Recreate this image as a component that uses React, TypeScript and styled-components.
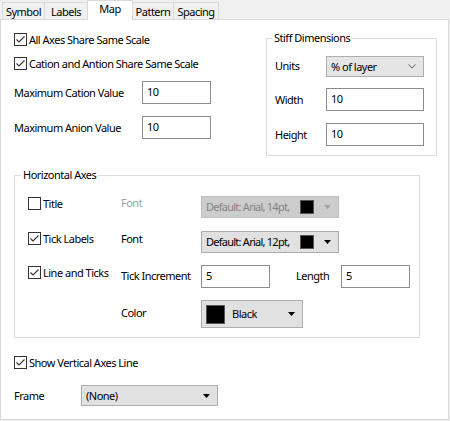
import React from 'react'
import styled, { createGlobalStyle } from 'styled-components'

const GlobalStyle = createGlobalStyle`
  body {
    margin: 0;
    background: #f0f0f0;
    font-family: "Noto Sans", "Liberation Sans", sans-serif;
    font-size: 11px;
    letter-spacing: -0.5px;
    color: #000;
  }
  * { box-sizing: border-box; }
`

const Window = styled.div`
  width: 450px;
  height: 421px;
  display: flex;
  flex-direction: column;
`

const TabBar = styled.div`
  display: flex;
  align-items: flex-end;
  height: 19px;
  padding-left: 2px;
`

const Tab = styled.div<{ $active?: boolean; $w: number }>`
  position: relative;
  width: ${p => p.$w}px;
  height: ${p => (p.$active ? 20 : 17)}px;
  margin-left: -1px;
  margin-bottom: ${p => (p.$active ? -1 : 0)}px;
  z-index: ${p => (p.$active ? 2 : 1)};
  display: flex;
  justify-content: center;
  align-items: ${p => (p.$active ? 'flex-start' : 'center')};
  padding-top: ${p => (p.$active ? 0 : 1)}px;
  line-height: 16px;
  background: ${p => (p.$active ? '#fff' : '#f0f0f0')};
  border: 1px solid #d9d9d9;
  border-bottom: none;
  &:first-child { margin-left: 0; }
`

const Panel = styled.div`
  width: 449px;
  height: 401px;
  background: #fff;
  border: 1px solid #d9d9d9;
  padding: 10px 0 0 13px;
`

const TopSection = styled.div`
  display: flex;
  align-items: flex-start;
`

const LeftColumn = styled.div`
  width: 252px;
  padding-top: 3px;
  display: flex;
  flex-direction: column;
`

const GroupBox = styled.fieldset<{ $w: number; $pad: string; $mt?: number }>`
  width: ${p => p.$w}px;
  margin: ${p => p.$mt ?? 0}px 0 0 0;
  min-inline-size: 0;
  border: 1px solid #dcdcdc;
  padding: ${p => p.$pad};
`

const GroupTitle = styled.legend<{ $shift: number }>`
  padding: 0 2px;
  margin-left: ${p => p.$shift}px;
  line-height: 16px;
`

const CheckRow = styled.label<{ $mt?: number }>`
  display: flex;
  align-items: center;
  height: 13px;
  margin-top: ${p => p.$mt ?? 0}px;
  white-space: nowrap;
`

const Box = styled.span`
  width: 13px;
  height: 13px;
  flex: none;
  border: 1px solid #333;
  background: #fff;
  margin-right: 2px;
  display: flex;
`

const FieldRow = styled.div<{ $mt?: number }>`
  display: flex;
  align-items: center;
  margin-top: ${p => p.$mt ?? 0}px;
`

const FieldLabel = styled.span<{ $w: number; $dim?: boolean; $dy?: number }>`
  width: ${p => p.$w}px;
  flex: none;
  line-height: 16px;
  white-space: nowrap;
  color: ${p => (p.$dim ? '#a0a0a0' : '#000')};
  position: relative;
  top: ${p => p.$dy ?? 0}px;
`

const TextBox = styled.div<{ $w: number }>`
  width: ${p => p.$w}px;
  height: 23px;
  flex: none;
  border: 1px solid #8c8c8c;
  background: #fff;
  padding: 2px 0 0 4px;
  line-height: 16px;
`

const Combo = styled.div<{ $w: number; $h?: number; $disabled?: boolean; $light?: boolean }>`
  width: ${p => p.$w}px;
  height: ${p => p.$h ?? 21}px;
  flex: none;
  display: flex;
  align-items: center;
  padding: 0 7px 0 4px;
  line-height: 16px;
  white-space: nowrap;
  overflow: hidden;
  background: ${p => (p.$disabled ? '#cccccc' : p.$light ? '#e5e5e5' : '#e1e1e1')};
  border: 1px solid ${p => (p.$disabled ? '#bfbfbf' : '#adadad')};
  color: ${p => (p.$disabled ? '#838383' : '#000')};
`

const ComboText = styled.span<{ $tight?: boolean }>`
  flex: 1;
  min-width: 0;
  letter-spacing: ${p => (p.$tight ? '-0.75px' : '-0.5px')};
`

const Swatch = styled.span<{ $size: number; $gap: number }>`
  width: ${p => p.$size}px;
  height: ${p => p.$size}px;
  flex: none;
  background: #000;
  border: 1px solid #555;
  margin-right: ${p => p.$gap}px;
`

const AxesGrid = styled.div`
  display: flex;
  flex-direction: column;
`

const AxisRow = styled.div<{ $mt?: number }>`
  display: flex;
  align-items: flex-start;
  margin-top: ${p => p.$mt ?? 0}px;
`

const CheckCell = styled.div`
  width: 93px;
  flex: none;
  padding-top: 1px;
`

const Spacer = styled.div<{ $w: number }>`
  width: ${p => p.$w}px;
  flex: none;
`

const BottomArea = styled.div`
  display: flex;
  flex-direction: column;
`

function Check({ checked, children, mt }: { checked?: boolean; children: React.ReactNode; mt?: number }) {
  return (
    <CheckRow $mt={mt}>
      <Box>
        {checked && (
          <svg width="11" height="11" viewBox="0 0 11 11">
            <polyline points="1.5,5.5 4,8 9.5,2.5" fill="none" stroke="#333" strokeWidth="1.1" />
          </svg>
        )}
      </Box>
      {children}
    </CheckRow>
  )
}

function Arrow({ color = '#000' }: { color?: string }) {
  return (
    <svg width="7" height="4" viewBox="0 0 7 4">
      <polygon points="0,0 7,0 3.5,4" fill={color} />
    </svg>
  )
}

function Chevron() {
  return (
    <svg width="8" height="5" viewBox="0 0 8 5">
      <polyline points="0.5,0.5 4,4 7.5,0.5" fill="none" stroke="#606060" strokeWidth="1" />
    </svg>
  )
}

export default function App() {
  return (
    <>
      <GlobalStyle />
      <Window>
        <TabBar>
          <Tab $w={43}>Symbol</Tab>
          <Tab $w={44}>Labels</Tab>
          <Tab $w={46} $active>Map</Tab>
          <Tab $w={42}>Pattern</Tab>
          <Tab $w={46}>Spacing</Tab>
        </TabBar>
        <Panel>
          <TopSection>
            <LeftColumn>
              <Check checked>All Axes Share Same Scale</Check>
              <Check checked mt={11}>Cation and Antion Share Same Scale</Check>
              <FieldRow $mt={11}>
                <FieldLabel $w={128}>Maximum Cation Value</FieldLabel>
                <TextBox $w={69}>10</TextBox>
              </FieldRow>
              <FieldRow $mt={12}>
                <FieldLabel $w={128}>Maximum Anion Value</FieldLabel>
                <TextBox $w={69}>10</TextBox>
              </FieldRow>
            </LeftColumn>
            <GroupBox $w={171} $pad="10px 11px 9px 8px">
              <GroupTitle $shift={-3}>Stiff Dimensions</GroupTitle>
              <FieldRow>
                <FieldLabel $w={51} $dy={-1}>Units</FieldLabel>
                <Combo $w={98} $light>
                  <ComboText>% of layer</ComboText>
                  <Chevron />
                </Combo>
              </FieldRow>
              <FieldRow $mt={11}>
                <FieldLabel $w={51}>Width</FieldLabel>
                <TextBox $w={98}>10</TextBox>
              </FieldRow>
              <FieldRow $mt={12}>
                <FieldLabel $w={51}>Height</FieldLabel>
                <TextBox $w={98}>10</TextBox>
              </FieldRow>
            </GroupBox>
          </TopSection>

          <GroupBox $w={406} $pad="13px 0 9px 13px" $mt={11}>
            <GroupTitle $shift={-7}>Horizontal Axes</GroupTitle>
            <AxesGrid>
              <AxisRow>
                <CheckCell><Check>Title</Check></CheckCell>
                <FieldLabel $w={80} $dim $dy={-1}>Font</FieldLabel>
                <Combo $w={138} $h={22} $disabled>
                  <ComboText $tight>Default: Arial, 14pt,</ComboText>
                  <Swatch $size={14} $gap={10} />
                  <Arrow color="#a0a0a0" />
                </Combo>
              </AxisRow>
              <AxisRow $mt={13}>
                <CheckCell><Check checked>Tick Labels</Check></CheckCell>
                <FieldLabel $w={80} $dy={0}>Font</FieldLabel>
                <Combo $w={138} $h={22}>
                  <ComboText $tight>Default: Arial, 12pt,</ComboText>
                  <Swatch $size={14} $gap={10} />
                  <Arrow />
                </Combo>
              </AxisRow>
              <AxisRow $mt={12}>
                <CheckCell><Check checked>Line and Ticks</Check></CheckCell>
                <FieldLabel $w={80} $dy={3}>Tick Increment</FieldLabel>
                <TextBox $w={69}>5</TextBox>
                <Spacer $w={26} />
                <FieldLabel $w={45} $dy={3}>Length</FieldLabel>
                <TextBox $w={69}>5</TextBox>
              </AxisRow>
              <AxisRow $mt={12}>
                <Spacer $w={93} />
                <FieldLabel $w={80} $dy={5}>Color</FieldLabel>
                <Combo $w={102} $h={28}>
                  <Swatch $size={19} $gap={7} />
                  <ComboText>Black</ComboText>
                  <Arrow />
                </Combo>
              </AxisRow>
            </AxesGrid>
          </GroupBox>

          <BottomArea>
            <Check checked mt={18}>Show Vertical Axes Line</Check>
            <FieldRow $mt={16}>
              <FieldLabel $w={67}>Frame</FieldLabel>
              <Combo $w={137}>
                <ComboText>(None)</ComboText>
                <Arrow />
              </Combo>
            </FieldRow>
          </BottomArea>
        </Panel>
      </Window>
    </>
  )
}
